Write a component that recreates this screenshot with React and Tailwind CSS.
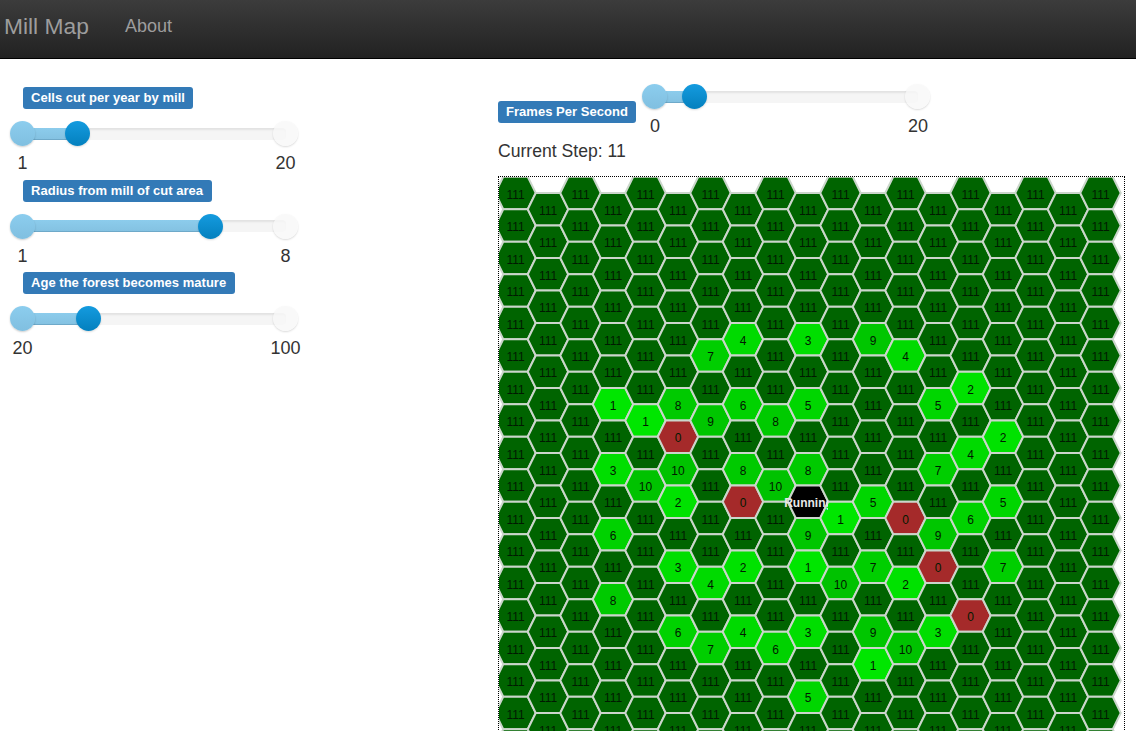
import React from 'react'

// grid geometry, measured from the map
const COLS = 19
const ROWS = 18
const STEP_X = 32.5
const STEP_Y = 32.5
const ORIGIN_X = 16.5
const ORIGIN_Y = 16

// "col,row": age of the cells that were cut
const cutCells = {
  '7,4': 4, '9,4': 3, '11,4': 9, '6,5': 7, '12,5': 4,
  '14,6': 2, '3,6': 1, '5,6': 8, '7,6': 6, '9,6': 5, '13,6': 5,
  '4,7': 1, '6,7': 9, '8,7': 8, '5,7': 0, '15,7': 2,
  '14,8': 4, '3,8': 3, '5,8': 10, '7,8': 8, '9,8': 8, '13,8': 7,
  '4,9': 10, '8,9': 10, '5,9': 2, '7,9': 0, '11,9': 5, '15,9': 5,
  '10,10': 1, '12,10': 0, '14,10': 6, '3,10': 6, '9,10': 9, '13,10': 9,
  '5,11': 3, '7,11': 2, '9,11': 1, '11,11': 7, '13,11': 0, '15,11': 7,
  '6,12': 4, '10,12': 10, '12,12': 2, '3,12': 8,
  '14,13': 0, '5,13': 6, '7,13': 4, '9,13': 3, '11,13': 9, '13,13': 3,
  '6,14': 7, '8,14': 6, '12,14': 10, '11,14': 1, '9,15': 5,
}

const ageColor = age => {
  if (age === 0) return '#a52a2a'
  if (age === 111) return '#006400'
  return `rgb(0, ${234 - age * 4}, 0)`
}

function hexPoints(cx, cy) {
  const hw = 20.25, ht = 12.25, hh = 16.25
  return [
    [cx - hw, cy], [cx - ht, cy - hh], [cx + ht, cy - hh],
    [cx + hw, cy], [cx + ht, cy + hh], [cx - ht, cy + hh],
  ].map(p => p.join(',')).join(' ')
}

function HexMap() {
  const cells = []
  for (let c = 0; c < COLS; c++) {
    for (let r = 0; r < ROWS; r++) {
      const key = `${c},${r}`
      cells.push({
        key,
        cx: ORIGIN_X + c * STEP_X,
        cy: ORIGIN_Y + r * STEP_Y + (c % 2 ? 16.25 : 0),
        age: key in cutCells ? cutCells[key] : 111,
        mill: key === '9,9',
      })
    }
  }

  return (
    <svg width="627" height="590" className="block border border-dotted border-black">
      <defs>
        <clipPath id="mill-clip">
          <rect x="280" y="300" width="49" height="50" />
        </clipPath>
      </defs>
      {cells.map(h => (
        <polygon
          key={h.key}
          points={hexPoints(h.cx, h.cy)}
          fill={h.mill ? '#000000' : ageColor(h.age)}
          stroke="#cbd6cb"
          strokeWidth="2"
        />
      ))}
      {cells.map(h => h.mill ? (
        <text key={h.key} x={h.cx + 0.5} y={h.cy + 1} textAnchor="middle" dominantBaseline="central"
          clipPath="url(#mill-clip)" fontSize="12" fontWeight="bold" fill="#e8e8e8">Running</text>
      ) : (
        <text key={h.key} x={h.cx} y={h.cy + 1.5} textAnchor="middle" dominantBaseline="central"
          fontSize="12" fill="#001a00">{h.age}</text>
      ))}
    </svg>
  )
}

function Label({ children }) {
  return (
    <div className="h-[22px] w-fit rounded-[3px] bg-[#337ab7] pr-[8.5px] pl-2 text-[13px] leading-[22px] font-bold tracking-[0.03px] whitespace-nowrap text-white">
      {children}
    </div>
  )
}

function Slider({ min, max, value }) {
  const pct = ((value - min) / (max - min)) * 100
  return (
    <div className="w-[288px]">
      <div className="h-[25px] px-[12.5px]">
        <div className="relative h-[25px]">
          {/* track */}
          <div className="absolute top-[6.5px] left-0 h-3 w-full rounded-sm bg-[#f5f5f5] shadow-[inset_0_2px_2px_rgba(0,0,0,0.08)]" />
          <div
            className="absolute top-[6.5px] left-0 h-3 border-b border-[#6ea9c9] bg-linear-to-b from-[#8cccec] to-[#84c2e2]"
            style={{ width: `${pct}%` }}
          />
          {/* max handle */}
          <div className="absolute top-0 left-full -ml-[12.5px] h-[25px] w-[25px] rounded-full bg-[#f7f7f7]/80 shadow-[0_1px_2px_rgba(0,0,0,0.15)]" />
          {/* min handle */}
          <div className="absolute top-0 left-0 -ml-[12.5px] h-[25px] w-[25px] rounded-full bg-linear-to-b from-[#8ccdee] to-[#80bfe0] shadow-[0_1px_2px_rgba(0,0,0,0.2)]" />
          {/* value handle */}
          <div
            className="absolute top-0 -ml-[12.5px] h-[25px] w-[25px] rounded-full bg-linear-to-b from-[#149bdf] to-[#0480be] shadow-[0_1px_2px_rgba(0,0,0,0.15)]"
            style={{ left: `${pct}%` }}
          />
        </div>
      </div>
      <div className="mt-[7px] flex justify-between text-[18px] leading-5">
        <span className="flex w-[25px] justify-center whitespace-nowrap">{min}</span>
        <span className="flex w-[25px] justify-center whitespace-nowrap">{max}</span>
      </div>
    </div>
  )
}

function SliderBlock({ label, min, max, value }) {
  return (
    <div>
      <div className="pl-[13px]"><Label>{label}</Label></div>
      <div className="mt-3"><Slider min={min} max={max} value={value} /></div>
    </div>
  )
}

export default function App() {
  return (
    <div className="h-[731px] overflow-hidden bg-white font-['Liberation_Sans',Arial,sans-serif] text-[#333]">
      {/* navbar */}
      <div className="flex h-[59px] items-center border-b border-black bg-linear-to-b from-[#3c3c3c] to-[#222] pb-[6px] text-[#9d9d9d]">
        <span className="ml-1 text-[22.8px]">Mill Map</span>
        <span className="ml-[36px] text-[18px]">About</span>
      </div>

      <div className="flex">
        {/* parameters */}
        <div className="flex w-[498px] flex-col gap-[6.5px] pt-7 pl-[10px]">
          <SliderBlock label="Cells cut per year by mill" min={1} max={20} value={5} />
          <SliderBlock label="Radius from mill of cut area" min={1} max={8} value={6} />
          <SliderBlock label="Age the forest becomes mature" min={20} max={100} value={40} />
        </div>

        {/* map */}
        <div className="pt-[25px]">
          <div className="flex items-start">
            <div className="mt-[17px]"><Label>Frames Per Second</Label></div>
            <div className="ml-[6px]"><Slider min={0} max={20} value={3} /></div>
          </div>
          <div className="mt-[2px] text-[17.6px] leading-[26px]">Current Step: 11</div>
          <div className="mt-3"><HexMap /></div>
        </div>
      </div>
    </div>
  )
}
